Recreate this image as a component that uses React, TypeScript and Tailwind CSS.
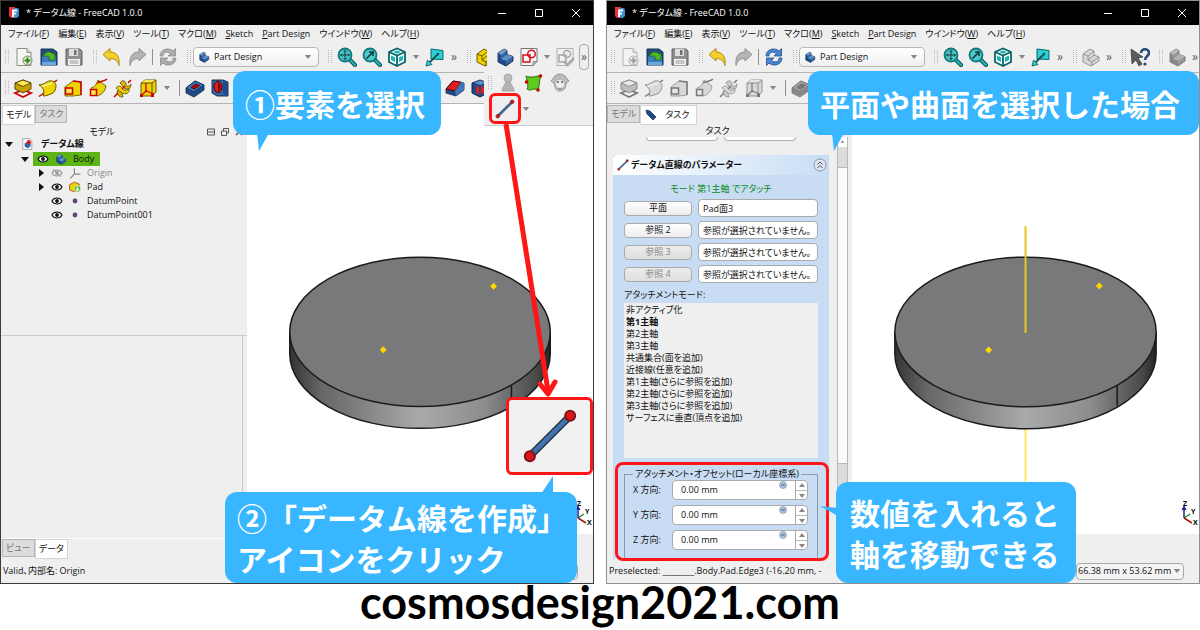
import type { ReactNode } from "react";

interface IconProps {
  muted?: boolean;
}

interface SvgProps extends IconProps {
  children: ReactNode;
}

function Svg({ muted, children }: SvgProps) {
  return (
    <svg
      viewBox="0 0 20 20"
      aria-hidden="true"
      className={`size-5 shrink-0 ${muted ? "grayscale opacity-60" : ""}`}
    >
      {children}
    </svg>
  );
}

/* ---------- アイコン ---------- */

function FreeCadLogo() {
  return (
    <svg viewBox="0 0 12 12" aria-hidden="true" className="size-3 shrink-0">
      <path d="M1 0h6v11H3L1 9z" fill="#e8323c" />
      <path d="M6 1h4l1 2v6l-2 2H6z" fill="#3b8fd0" />
      <path d="M4 2.500h5v2H6v1.300h2.200v1.800H6V10H4z" fill="#fff" />
    </svg>
  );
}

function NewIcon({ muted }: IconProps) {
  return (
    <Svg muted={muted}>
      <path d="M3 1.500h10l4 4v13H3z" fill="#f6f6f4" stroke="#8a8c88" />
      <path d="M13 1.500v4h4" fill="#ddd" stroke="#8a8c88" />
      <circle cx="13.500" cy="13.500" r="4.500" fill="#e8f3df" stroke="#6b8e58" />
      <path d="M13.500 10.500v6M10.500 13.500h6" stroke="#2f7d18" strokeWidth="2" />
    </Svg>
  );
}

function OpenIcon() {
  return (
    <Svg>
      <path d="M2 2h12l4 3v13H2z" fill="#234a7c" stroke="#17335a" />
      <path d="M3 9h14v9H3z" fill="#3d7cc4" />
      <path d="M3 15h14v3H3z" fill="#6ea5e0" />
      <path d="M4 10c1-5 7-7 10-3l2-1v7H9l2-2c-2-3-5-2-7-1z" fill="#4fb52a" stroke="#1d6c0c" strokeWidth=".8" />
    </Svg>
  );
}

function SaveIcon() {
  return (
    <Svg>
      <path d="M2 2h14l2 2v14H2z" fill="#8f918e" stroke="#5d5f5c" />
      <path d="M5 2h9v7H5z" fill="#dfe0de" />
      <path d="M10 3h2.500v5H10z" fill="#6e706d" />
      <path d="M4 12h12v6H4z" fill="#f4f4f3" />
      <path d="M5.500 14h9M5.500 16h9" stroke="#999" />
    </Svg>
  );
}

function UndoIcon() {
  return (
    <Svg>
      <path d="M1 7.500 8 1.500v3.500c6 0 10 4 9 13.500-1.500-5-4-7-9-7V14z" fill="#f5cf2c" stroke="#a87f06" strokeWidth=".9" />
    </Svg>
  );
}

function RedoIcon() {
  return (
    <Svg>
      <path d="M19 7.500 12 1.500v3.500C6 5 2 9 3 18.500c1.500-5 4-7 9-7V14z" fill="#b4b5b3" stroke="#8b8c8a" strokeWidth=".9" />
    </Svg>
  );
}

function RefreshIcon({ muted }: IconProps) {
  return (
    <Svg muted={muted}>
      <path d="M2 9c0-7 9-9 13-5l2.500-2.500V9H10l2.500-2.500C9 4 5 5 5 9z" fill="#4a86cf" stroke="#1f4e8f" strokeWidth=".8" />
      <path d="M18 11c0 7-9 9-13 5l-2.500 2.500V11H10l-2.500 2.500C11 16 15 15 15 11z" fill="#4a86cf" stroke="#1f4e8f" strokeWidth=".8" />
    </Svg>
  );
}

function BodyIcon({ muted }: IconProps) {
  return (
    <Svg muted={muted}>
      <path d="M3 6l6-4 3 1.500v4l6 2V14l-7 5-8-4z" fill="#3465a4" stroke="#0f2744" strokeWidth=".9" />
      <path d="M3 6l6-4 3 1.500L6 8z" fill="#729fcf" />
      <path d="M6 12l6-4.500 6 2-7 4.500z" fill="#5f8fc8" />
      <path d="M3 6l3 2v4l5 2v5l-8-4z" fill="#204a87" />
    </Svg>
  );
}

function ZoomIcon({ selection }: { selection?: boolean }) {
  return (
    <Svg>
      <path d="M12 12l6 6" stroke="#0d4d50" strokeWidth="4" strokeLinecap="round" />
      <path d="M12 12l6 6" stroke="#1fb6b8" strokeWidth="2.200" strokeLinecap="round" />
      <circle cx="8" cy="8" r="6.500" fill="#4fc8ca" stroke="#117a7e" strokeWidth="1.800" />
      {selection ? (
        <path d="M4.500 11.500 11 5M7 5h4v4" stroke="#0b3c3e" strokeWidth="1.600" fill="none" />
      ) : (
        <path d="M8 3.500v9M3.500 8h9M6.500 5 8 3.500 9.500 5M6.500 11 8 12.500 9.500 11M5 6.500 3.500 8 5 9.500M11 6.500 12.500 8 11 9.500" stroke="#0b3c3e" fill="none" />
      )}
    </Svg>
  );
}

function ViewCubeIcon() {
  return (
    <Svg>
      <path d="M2 5l8-3.500L18 5v10l-8 4-8-4z" fill="#f4ffff" stroke="#0d6468" strokeWidth="1.800" />
      <path d="M2 5l8 3.500L18 5M10 8.500V19" fill="none" stroke="#0d6468" strokeWidth="1.800" />
      <path d="M6 5l4-1.500L14 5l-4 1.700zM4 8.500l4 1.800V15l-4-2zM16 8.500l-4 1.800V15l4-2z" fill="#1fb3b6" />
    </Svg>
  );
}

function LinkViewIcon() {
  return (
    <Svg>
      <path d="M6 2l12 1.500v9L6 12z" fill="#2bd0d2" stroke="#0d6468" />
      <path d="M13 7l-9 9" stroke="#0d5357" strokeWidth="1.800" />
      <path d="M1 19l1.500-6L7 17.500z" fill="#2bd0d2" stroke="#0d5357" strokeWidth=".8" />
      <circle cx="13" cy="7" r="1.300" fill="#0d5357" />
    </Svg>
  );
}

function YellowPartIcon({ muted }: IconProps) {
  return (
    <Svg muted={muted}>
      <path d="M2 7l7-5 4 2v4l5 2v4l-8 5-8-4z" fill="#edd400" stroke="#5c4a00" strokeWidth=".9" />
      <path d="M2 7l5 2v4l4 2v4M7 9l6-5M7 13l6-5M11 15l7-5" fill="none" stroke="#5c4a00" strokeWidth=".9" />
    </Svg>
  );
}

function SketchIcon() {
  return (
    <Svg>
      <path d="M2 1.500h16v13l-4 4H2z" fill="#f7f7f7" stroke="#777" />
      <path d="M18 14.500h-4v4z" fill="#bbb" stroke="#777" strokeWidth=".7" />
      <circle cx="12.500" cy="7" r="3.800" fill="none" stroke="#d81418" strokeWidth="1.500" />
      <path d="M4 8h7v7H4z" fill="none" stroke="#d81418" strokeWidth="1.500" />
    </Svg>
  );
}

function ValidateIcon() {
  return (
    <Svg muted>
      <path d="M2 1.500h16v13l-4 4H2z" fill="#f2f2f2" stroke="#888" />
      <circle cx="12" cy="7" r="3.500" fill="none" stroke="#777" strokeWidth="1.500" />
      <path d="M4 8h7v7H4z" fill="none" stroke="#777" strokeWidth="1.500" />
      <path d="M9 14l3 4 7-7" fill="none" stroke="#777" strokeWidth="2.200" />
    </Svg>
  );
}

function PadIcon({ muted }: IconProps) {
  return (
    <Svg muted={muted}>
      <path d="M2 15l8-3 8 3-8 4z" fill="#fff" stroke="#cc0000" strokeWidth="1.800" />
      <path d="M2 5l8-3 8 3v6l-8 4-8-4z" fill="#c4a000" stroke="#4a3b00" strokeWidth=".9" />
      <path d="M2 5l8-3 8 3-8 3.500z" fill="#fce94f" stroke="#4a3b00" strokeWidth=".9" />
    </Svg>
  );
}

function RevolveIcon({ muted }: IconProps) {
  return (
    <Svg muted={muted}>
      <path d="M1 18.500 6 15M15 5l4-3" stroke="#cc0000" strokeWidth="1.500" />
      <path d="M1 7c4 0 7-3 10-4s7 1 7 5-2 7-5 8-5 2-8 2c2-5 0-9-4-11z" fill="#edd400" stroke="#5c4a00" strokeWidth=".9" />
      <path d="M4 8c4 0 7-2 10-3" fill="none" stroke="#fff7a0" strokeWidth="1.500" />
    </Svg>
  );
}

function LoftIcon({ muted }: IconProps) {
  return (
    <Svg muted={muted}>
      <path d="M2 9l8-6 8 1v13l-8 1H2z" fill="#edd400" stroke="#5c4a00" strokeWidth=".8" />
      <path d="M10 3l8 1v13" fill="none" stroke="#cc0000" strokeWidth="1.500" />
      <path d="M2.500 10h7v6h-7z" fill="#fce94f" stroke="#cc0000" strokeWidth="1.500" />
    </Svg>
  );
}

function PipeIcon({ muted }: IconProps) {
  return (
    <Svg muted={muted}>
      <path d="M3 10c4-1 6-4 7-8l8 6c-1 6-5 9-9 10z" fill="#edd400" stroke="#5c4a00" strokeWidth=".8" />
      <path d="M2.500 11.500h6v6h-6z" fill="#fce94f" stroke="#cc0000" strokeWidth="1.500" />
      <path d="M9 5c3-2 7-1 10-4" fill="none" stroke="#cc0000" strokeWidth="1.500" />
    </Svg>
  );
}

function HelixIcon({ muted }: IconProps) {
  return (
    <Svg muted={muted}>
      <path d="M3 10c2-3 5-2 6 0s4 4 7 0c1 5-3 7-7 5s-3-3-6-5z" fill="#edd400" stroke="#5c4a00" strokeWidth=".8" />
      <path d="M7 5c2-4 6-2 6 1s3 3 5 0c0 6-5 6-7 4S9 7 7 5zM4 13c3-1 5 1 6 6-4 0-6-2-6-6z" fill="#d6b800" stroke="#5c4a00" strokeWidth=".8" />
      <path d="M1 19l4-4M9 11l3-3M15 5l3-3" stroke="#cc0000" strokeWidth="1.500" />
    </Svg>
  );
}

function PrimitiveIcon({ muted }: IconProps) {
  return (
    <Svg muted={muted}>
      <path d="M3 5l4-3h11v12l-4 4H3z" fill="#edd400" stroke="#5c4a00" strokeWidth=".9" />
      <path d="M3 5l4-3h11l-4 3z" fill="#fce94f" />
      <path d="M3 5h11v13M14 5l4-3" fill="none" stroke="#5c4a00" />
      <path d="M8 5v8l-5 5M8 13l8 3" fill="none" stroke="#cc0000" strokeWidth="1.200" />
      <path d="M2 16h3v3H2zM13 16h3v3h-3zM7 12h2v2H7z" fill="#cc0000" />
    </Svg>
  );
}

function PocketIcon({ muted }: IconProps) {
  return (
    <Svg muted={muted}>
      <path d="M1 10l9-7 9 4v5l-10 7-8-4z" fill="#204a87" stroke="#0f2744" strokeWidth=".8" />
      <path d="M1 10l9-7 9 4-10 7z" fill="#3f74b6" stroke="#0f2744" strokeWidth=".8" />
      <path d="M6 9.500 10.500 6l4 1.500L9.500 11z" fill="#cc0000" stroke="#300" strokeWidth=".8" />
    </Svg>
  );
}

function HoleIcon({ muted }: IconProps) {
  return (
    <Svg muted={muted}>
      <path d="M2 2h11l5 2v14H7l-5-3z" fill="#3465a4" stroke="#0f2744" strokeWidth=".9" />
      <path d="M13 2l5 2v14l-5-3z" fill="#204a87" />
      <ellipse cx="8" cy="9" rx="4" ry="5.500" fill="#e11d1d" stroke="#3a0000" />
      <path d="M8 4.500c3 1 3 8 0 9" fill="#7a0000" />
    </Svg>
  );
}

function ChamferIcon() {
  return (
    <Svg>
      <path d="M1 11 8 3l11 2v7l-8 6-10-3z" fill="#204a87" stroke="#0f2744" strokeWidth=".8" />
      <path d="M1 11 8 3l8 1-6 9z" fill="#e11d1d" stroke="#3a0000" strokeWidth=".8" />
      <path d="M10 13l6-9 3 1v7l-8 6z" fill="#3f74b6" />
    </Svg>
  );
}

function GrooveIcon() {
  return (
    <Svg>
      <path d="M2 5l8-3 8 3v10l-8 4-8-4z" fill="#204a87" stroke="#0f2744" />
      <path d="M4 4.500l6-2 6 2-6 2.500z" fill="#5f8fc8" />
      <path d="M6 8l3 1v7l-3-1zM14 8l-3 1v7l3-1z" fill="#e11d1d" />
    </Svg>
  );
}

function CloneIcon() {
  return (
    <Svg muted>
      <circle cx="10" cy="5" r="4" fill="#999" stroke="#777" />
      <path d="M8 9h4c1 3 4 5 4 9H4c0-4 3-6 4-9z" fill="#8c8c8c" stroke="#777" />
    </Svg>
  );
}

function SubShapeIcon() {
  return (
    <Svg>
      <path d="M2 3c4 2 10 1 15-1-2 5-1 9-3 15-4-3-7 2-11-1 2-3 0-8-1-13z" fill="#5fc91e" stroke="#2b6d08" />
      <circle cx="16.500" cy="3" r="1.800" fill="#cc0000" />
      <circle cx="2.500" cy="9" r="1.800" fill="#cc0000" />
      <circle cx="14" cy="17" r="1.800" fill="#cc0000" />
    </Svg>
  );
}

function SheepIcon() {
  return (
    <Svg muted>
      <path d="M5 3c3-3 8-2 10 0l4 5-3 2c0 5-2 8-6 8s-5-3-6-8L1 8z" fill="#999" stroke="#555" />
      <circle cx="10" cy="11" r="4" fill="#eee" />
      <circle cx="8" cy="9" r="1" />
      <circle cx="12" cy="9" r="1" />
      <path d="M8 15l2 1 2-1" stroke="#444" fill="none" />
    </Svg>
  );
}

function WhatsThisIcon() {
  return (
    <Svg>
      <path d="M11 6c0-5 8-5 8 0 0 3-4 3-4 7" fill="none" stroke="#24477c" strokeWidth="2.600" />
      <circle cx="15" cy="17" r="1.600" fill="#24477c" />
      <path d="M1 2l12 8-5 1 4 6-3 2-3-6-4 4z" fill="#5b5d5b" stroke="#333" strokeWidth=".7" />
    </Svg>
  );
}

function DatumLineIcon({ className }: { className: string }) {
  return (
    <svg viewBox="0 0 20 20" aria-hidden="true" className={className}>
      <path d="M2.800 17.200 17.200 2.800" stroke="#27323f" strokeWidth="2.600" />
      <path d="M2.800 17.200 17.200 2.800" stroke="#3f74b0" strokeWidth="1.600" />
      <circle cx="2.800" cy="17.200" r="1.800" fill="#d8171b" stroke="#7b1416" strokeWidth=".7" />
      <circle cx="17.200" cy="2.800" r="1.800" fill="#d8171b" stroke="#7b1416" strokeWidth=".7" />
    </svg>
  );
}

function EyeIcon({ off }: { off?: boolean }) {
  return (
    <svg viewBox="0 0 12 8" aria-hidden="true" className="h-2 w-3 shrink-0">
      <path d="M1 4c2-4 8-4 10 0-2 4-8 4-10 0z" fill={off ? "none" : "#fff"} stroke={off ? "#999" : "#111"} strokeWidth="1.100" />
      <circle cx="6" cy="4" r="1.900" fill={off ? "#999" : "#111"} />
      {off && <path d="M2 0l8 8" stroke="#999" />}
    </svg>
  );
}

function DocumentIcon() {
  return (
    <Svg>
      <path d="M3 1h12l3 3v15H3z" fill="#fff" stroke="#777" />
      <path d="M6 9l5-3 5 3v5l-5 3-5-3z" fill="#3465a4" />
      <circle cx="13" cy="7" r="3.500" fill="#d8171b" />
    </Svg>
  );
}

function OriginIcon() {
  return (
    <Svg>
      <path d="M9 2v10h10M9 12l-7 7" fill="none" stroke="#888" strokeWidth="2" />
    </Svg>
  );
}

function PadTipIcon() {
  return (
    <Svg>
      <path d="M1 6l8-4 8 3v8l-8 5-8-3z" fill="#edd400" stroke="#a40000" />
      <circle cx="14" cy="13" r="5.500" fill="#4fb52a" stroke="#fff" />
      <path d="M14 9v6M11.500 13l2.500 3 2.500-3" fill="none" stroke="#fff" strokeWidth="1.800" />
    </Svg>
  );
}

function PointIcon() {
  return (
    <Svg>
      <circle cx="10" cy="10" r="4" fill="#3d4f86" />
      <circle cx="10" cy="10" r="2" fill="#a83250" />
    </Svg>
  );
}

function DownArrow() {
  return (
    <svg viewBox="0 0 8 5" aria-hidden="true" className="h-1 w-2 shrink-0">
      <path d="M0 0h8L4 5z" fill="#888" />
    </svg>
  );
}

/* ---------- ツールバー ---------- */

function Grip() {
  return (
    <svg viewBox="0 0 4 14" aria-hidden="true" className="h-3.5 w-1 shrink-0">
      <path d="M.5 0v14M3.500 0v14" stroke="#b5b5b5" strokeDasharray="1 1" />
    </svg>
  );
}

function Separator() {
  return <span className="h-4 w-px shrink-0 bg-[#8f8f8f]" />;
}

function ToolButton({ label, children }: { label: string; children: ReactNode }) {
  return (
    <button type="button" aria-label={label} className="flex shrink-0 items-center">
      {children}
    </button>
  );
}

function MoreButton() {
  return (
    <button type="button" aria-label="その他" className="w-2 shrink-0 text-center text-xs leading-4 text-[#555]">
      »
    </button>
  );
}

const menus = [
  { label: "ファイル", key: "F" },
  { label: "編集", key: "E" },
  { label: "表示", key: "V" },
  { label: "ツール", key: "T" },
  { label: "マクロ", key: "M" },
  { label: "Sketch" },
  { label: "Part Design" },
  { label: "ウインドウ", key: "W" },
  { label: "ヘルプ", key: "H" },
];

function TitleBar() {
  return (
    <header className="flex h-6 shrink-0 items-center bg-black pl-[7px] pr-3 text-white">
      <FreeCadLogo />
      <h2 className="ml-1.5 flex-1">* データム線 - FreeCAD 1.0.0</h2>
      <div className="flex items-center gap-[27px]">
        <button type="button" aria-label="最小化">
          <svg viewBox="0 0 10 10" className="size-2.5"><path d="M1 5.500h8" stroke="#fff" /></svg>
        </button>
        <button type="button" aria-label="最大化">
          <svg viewBox="0 0 10 10" className="size-2.5"><path d="M1.500 1.500h7v7h-7z" fill="none" stroke="#fff" /></svg>
        </button>
        <button type="button" aria-label="閉じる">
          <svg viewBox="0 0 10 10" className="size-2.5"><path d="M1 1l8 8M9 1 1 9" stroke="#fff" /></svg>
        </button>
      </div>
    </header>
  );
}

function MenuBar() {
  return (
    <nav className="flex h-[17px] shrink-0 items-center gap-[9px] pl-[7px]">
      {menus.map((menu) => (
        <button key={menu.label} type="button" className="whitespace-nowrap">
          {menu.key ? (
            <>
              {menu.label}(<u>{menu.key}</u>)
            </>
          ) : (
            <>
              <u>{menu.label[0]}</u>
              {menu.label.slice(1)}
            </>
          )}
        </button>
      ))}
    </nav>
  );
}

function MainToolbar({ editing }: { editing?: boolean }) {
  return (
    <div className="flex h-[31px] shrink-0 items-center gap-[9px] overflow-hidden border-b border-[#b4b4b4] pl-1">
      <div className="flex items-center gap-[5px]">
        <Grip />
        <ToolButton label="新規"><NewIcon muted={editing} /></ToolButton>
        <ToolButton label="開く"><OpenIcon /></ToolButton>
        <ToolButton label="保存"><SaveIcon /></ToolButton>
      </div>
      <div className="flex items-center gap-[5px]">
        <Grip />
        <ToolButton label="元に戻す"><UndoIcon /></ToolButton>
        <ToolButton label="やり直す"><RedoIcon /></ToolButton>
        <Separator />
        <ToolButton label="更新"><RefreshIcon muted={!editing} /></ToolButton>
      </div>
      <div className="flex items-center gap-0.5">
        <Grip />
        <div className="flex w-[126px] items-center rounded-sm border border-[#b8b8b8] bg-gradient-to-b from-white to-[#f0f0f0] pl-1 pr-1.5">
          <span className="[&>svg]:size-3"><BodyIcon /></span>
          <select aria-label="ワークベンチ" className="h-[18px] min-w-0 flex-1 appearance-none bg-transparent pl-1">
            <option>Part Design</option>
          </select>
          <DownArrow />
        </div>
      </div>
      <div className="flex items-center gap-[5px]">
        <Grip />
        <ToolButton label="全てにフィット"><ZoomIcon /></ToolButton>
        <ToolButton label="選択にフィット"><ZoomIcon selection /></ToolButton>
        <ToolButton label="アイソメトリック"><ViewCubeIcon /></ToolButton>
        <DownArrow />
        <ToolButton label="リンク先へ移動"><LinkViewIcon /></ToolButton>
        <MoreButton />
      </div>
      {editing ? (
        <>
          <div className="flex items-center gap-1">
            <Grip />
            <ToolButton label="パート"><YellowPartIcon muted /></ToolButton>
            <MoreButton />
          </div>
          <div className="flex items-center gap-1">
            <Grip />
            <ToolButton label="これは何?"><WhatsThisIcon /></ToolButton>
          </div>
          <div className="flex items-center gap-1">
            <Grip />
            <ToolButton label="ボディー"><BodyIcon muted /></ToolButton>
            <MoreButton />
          </div>
        </>
      ) : (
        <div className="flex items-center gap-1">
          <Grip />
          <div className="mr-1 w-3 overflow-hidden">
            <ToolButton label="パート"><YellowPartIcon /></ToolButton>
          </div>
          <ToolButton label="ボディー"><BodyIcon /></ToolButton>
          <ToolButton label="スケッチ"><SketchIcon /></ToolButton>
          <DownArrow />
          <ToolButton label="スケッチを検証"><ValidateIcon /></ToolButton>
          <span className="flex rounded-sm border border-[#aaa] py-1"><MoreButton /></span>
        </div>
      )}
    </div>
  );
}

function ModelingToolbar({ muted }: IconProps) {
  return (
    <div className="flex h-[31px] shrink-0 items-center gap-1 overflow-hidden border-b border-[#b4b4b4] pl-1">
      <Grip />
      <div className="flex items-center gap-[5px]">
        <ToolButton label="パッド"><PadIcon muted={muted} /></ToolButton>
        <ToolButton label="レボリューション"><RevolveIcon muted={muted} /></ToolButton>
        <ToolButton label="ロフト"><LoftIcon muted={muted} /></ToolButton>
        <ToolButton label="パイプ"><PipeIcon muted={muted} /></ToolButton>
        <ToolButton label="らせん"><HelixIcon muted={muted} /></ToolButton>
        <ToolButton label="プリミティブ"><PrimitiveIcon muted={muted} /></ToolButton>
        <DownArrow />
      </div>
      <div className="flex items-center gap-[5px] pl-1">
        <Separator />
        <ToolButton label="ポケット"><PocketIcon muted={muted} /></ToolButton>
        <ToolButton label="ホール"><HoleIcon muted={muted} /></ToolButton>
      </div>
      {!muted && (
        <div className="ml-auto mr-[103px] flex items-center gap-[5px]">
          <ToolButton label="面取り"><ChamferIcon /></ToolButton>
          <ToolButton label="グルーブ"><GrooveIcon /></ToolButton>
        </div>
      )}
    </div>
  );
}

/* ---------- 3Dビュー ---------- */

function Viewport({ axis }: { axis?: boolean }) {
  const gradient = axis ? "side-right" : "side-left";

  return (
    <div className="flex min-w-0 flex-1 flex-col">
      <div className="relative min-h-0 flex-1 bg-white">
        <svg viewBox="0 0 348 430" role="img" aria-label="円盤" className="size-full">
          <defs>
            <linearGradient id={gradient}>
              <stop offset="0" stopColor="#333" />
              <stop offset=".12" stopColor="#666" />
              <stop offset=".5" stopColor="#a9aaac" />
              <stop offset=".75" stopColor="#8b8c8e" />
              <stop offset=".95" stopColor="#484848" />
              <stop offset="1" stopColor="#222" />
            </linearGradient>
          </defs>
          {axis && <path d="M174 320v58" stroke="#ffe45c" strokeWidth="2" />}
          <path d="M43 228v22a131 75 0 0 0 262 0v-22z" fill={`url(#${gradient})`} stroke="#1b1b1b" strokeWidth="1.500" />
          <ellipse cx="174" cy="228" rx="131" ry="75" fill="#78797b" stroke="#1b1b1b" strokeWidth="1.500" />
          <path d="M266 282v20" stroke="#1b1b1b" strokeWidth="1.500" />
          <path d="M248 178.500l3.500 3.500-3.500 3.500-3.500-3.500zM137 242.500l3.500 3.500-3.500 3.500-3.500-3.500z" fill="#ffd400" />
          {axis && <path d="M174 122v107" stroke="#e9c51c" strokeWidth="2" />}
        </svg>
        <svg viewBox="0 0 20 28" aria-hidden="true" className="absolute bottom-1.5 right-0 h-7 w-5">
          <path d="M5 18V8" stroke="#22209a" strokeWidth="1.500" />
          <path d="M2.500 10 5 5l2.500 5z" fill="#22209a" />
          <path d="M5 18l6-4" stroke="#1c8a2c" strokeWidth="1.500" />
          <path d="M5 18l8 5" stroke="#a01818" strokeWidth="1.500" />
          <text x="4" y="6" className="text-[7px] font-bold">Z</text>
          <text x="12" y="14" className="text-[7px] font-bold">Y</text>
          <text x="14" y="25" className="text-[7px] font-bold">X</text>
        </svg>
      </div>
      <div className="h-[25px] shrink-0" />
    </div>
  );
}

function StatusBar({ children }: { children: ReactNode }) {
  return (
    <footer className="flex h-6 shrink-0 items-center justify-between whitespace-nowrap pl-0.5 pr-[15px]">
      <span>{children}</span>
      <div className="flex h-[17px] shrink-0 items-center rounded-sm border border-[#aaa] bg-[#f4f4f4] pr-0.5">
        <select aria-label="寸法" className="appearance-none bg-transparent px-px">
          <option>66.38 mm x 53.62 mm</option>
        </select>
        <DownArrow />
      </div>
    </footer>
  );
}

function PanelTab({ active, children }: { active?: boolean; children: ReactNode }) {
  return (
    <button
      type="button"
      role="tab"
      aria-selected={Boolean(active)}
      className={`flex items-center gap-2 whitespace-nowrap border px-[3px] ${
        active ? "h-5 border-[#d5d5d5] bg-white" : "h-[18px] border-[#b4b4b4] bg-[#dcdcdc] text-[#777]"
      }`}
    >
      {children}
    </button>
  );
}

/* ---------- モデルパネル ---------- */

const treeItems = [
  { name: "Origin", icon: <OriginIcon />, hidden: true, branch: true },
  { name: "Pad", icon: <PadTipIcon />, branch: true },
  { name: "DatumPoint", icon: <PointIcon /> },
  { name: "DatumPoint001", icon: <PointIcon /> },
];

function TreeArrow({ open, blank }: { open?: boolean; blank?: boolean }) {
  return (
    <svg viewBox="0 0 8 8" aria-hidden="true" className="size-2 shrink-0">
      {!blank && <path d={open ? "M0 2h8L4 7z" : "M2 0l5 4-5 4z"} fill="#111" />}
    </svg>
  );
}

function ModelPanel() {
  return (
    <aside className="flex w-[246px] shrink-0 flex-col">
      <div role="tablist" className="flex h-[21px] shrink-0 items-start pl-px pt-px">
        <PanelTab active>モデル</PanelTab>
        <PanelTab>タスク</PanelTab>
      </div>
      <div className="grid h-3 shrink-0 grid-cols-[1fr_auto_1fr] items-center pr-1">
        <span />
        <h3 className="pr-10">モデル</h3>
        <div className="flex justify-end gap-1.5 text-[#555]">
          <svg viewBox="0 0 8 8" className="size-2"><path d="M.5 1h7v6h-7zM.5 4h7" fill="none" stroke="currentColor" /></svg>
          <svg viewBox="0 0 8 8" className="size-2"><path d="M.5 3h5v4.500h-5zM2.500 3V.5h5V5h-2" fill="none" stroke="currentColor" /></svg>
          <svg viewBox="0 0 8 8" className="size-2"><path d="M1 1l6 6M7 1 1 7" stroke="currentColor" strokeWidth="1.500" /></svg>
        </div>
      </div>
      <ul className="min-h-0 flex-1 border-b border-[#ccc]">
        <li className="flex h-3.5 items-center gap-2 pl-1">
          <TreeArrow open />
          <span className="[&>svg]:size-3"><DocumentIcon /></span>
          <strong>データム線</strong>
        </li>
        <li className="flex h-[15px] items-center gap-1 pl-5">
          <TreeArrow open />
          <span className="flex h-3.5 items-center gap-1.5 bg-[#5cb514] pl-1 pr-1.5">
            <EyeIcon />
            <span className="[&>svg]:size-3"><BodyIcon /></span>
            Body
          </span>
        </li>
        {treeItems.map((item) => (
          <li
            key={item.name}
            className={`flex h-3.5 items-center gap-1.5 pl-9 ${item.hidden ? "text-[#888]" : ""}`}
          >
            <TreeArrow blank={!item.branch} />
            <EyeIcon off={item.hidden} />
            <span className="[&>svg]:size-3">{item.icon}</span>
            {item.name}
          </li>
        ))}
      </ul>
      <div className="mr-1 h-[202px] shrink-0 border-r border-[#ccc]" />
      <div role="tablist" className="flex h-[21px] shrink-0 items-start border-t border-white pl-px">
        <PanelTab>ビュー</PanelTab>
        <PanelTab active>データ</PanelTab>
      </div>
    </aside>
  );
}

/* ---------- タスクパネル ---------- */

const references = [
  { label: "平面", value: "Pad面3" },
  { label: "参照 2", value: "参照が選択されていません。" },
  { label: "参照 3", value: "参照が選択されていません。", disabled: true },
  { label: "参照 4", value: "参照が選択されていません。", disabled: true },
];

const attachmentModes = [
  "非アクティブ化",
  "第1主軸",
  "第2主軸",
  "第3主軸",
  "共通集合(面を追加)",
  "近接線(任意を追加)",
  "第1主軸(さらに参照を追加)",
  "第2主軸(さらに参照を追加)",
  "第3主軸(さらに参照を追加)",
  "サーフェスに垂直(頂点を追加)",
];

function OffsetRow({ axis }: { axis: string }) {
  return (
    <div className="flex items-center">
      <label htmlFor={`offset-${axis}`} className="w-[39px] shrink-0 whitespace-nowrap">
        {axis} 方向:
      </label>
      <div className="flex h-5 min-w-0 flex-1 rounded-sm border border-[#aaa] bg-white">
        <input id={`offset-${axis}`} defaultValue="0.00 mm" className="w-0 min-w-0 flex-1 bg-transparent pl-2" />
        <svg viewBox="0 0 8 8" aria-hidden="true" className="mr-2 size-2 shrink-0">
          <circle cx="4" cy="4" r="3.500" fill="#b9cde3" stroke="#7790ac" strokeWidth=".7" />
          <path d="M2 4h4M3 2.500v3M5 2.500v3" stroke="#4b6a90" strokeWidth=".7" />
        </svg>
        <div className="flex w-3 shrink-0 flex-col items-center justify-around border-l border-[#aaa]">
          <svg viewBox="0 0 6 4" aria-hidden="true" className="h-1 w-1.5"><path d="M0 4h6L3 0z" fill="#888" /></svg>
          <span className="h-px w-full bg-[#bbb]" />
          <svg viewBox="0 0 6 4" aria-hidden="true" className="h-1 w-1.5"><path d="M0 0h6L3 4z" fill="#888" /></svg>
        </div>
      </div>
    </div>
  );
}

function TaskPanel() {
  return (
    <aside className="flex min-h-0 w-[245px] shrink-0 flex-col">
      <div role="tablist" className="flex h-[21px] shrink-0 items-start pt-px">
        <PanelTab>モデル</PanelTab>
        <PanelTab active>
          <svg viewBox="0 0 12 12" aria-hidden="true" className="ml-px size-3">
            <path d="M1 1l4 1 6 6-3 3-6-6z" fill="#204a87" stroke="#0f2744" strokeWidth=".7" />
          </svg>
          <span className="pr-1">タスク</span>
        </PanelTab>
      </div>
      <h3 className="h-3 shrink-0 pr-6 text-center leading-3">タスク</h3>
      <div className="flex min-h-0 flex-1">
        <div className="min-w-0 flex-1 overflow-hidden pl-1.5 pr-2">
          <div className="flex justify-center gap-1.5">
            <div className="h-1 w-[72px] rounded-b border-x border-b border-[#b0b0b0] bg-white" />
            <div className="h-1 w-[72px] rounded-b border-x border-b border-[#b0b0b0] bg-white" />
          </div>
          <section className="mt-3.5 bg-[#c8ddf4]">
            <div className="flex h-5 items-center gap-0.5 rounded-t-sm bg-gradient-to-r from-white to-[#c8ddf4] pl-1 pr-0.5">
              <DatumLineIcon className="size-3" />
              <h4 className="flex-1 whitespace-nowrap font-bold">データム直線のパラメーター</h4>
              <button type="button" aria-label="折りたたむ">
                <svg viewBox="0 0 14 14" className="size-3.5">
                  <circle cx="7" cy="7" r="6" fill="#dde5ee" stroke="#8b96a3" />
                  <path d="M4.500 6.500 7 4l2.500 2.500M4.500 10 7 7.500 9.500 10" fill="none" stroke="#555" />
                </svg>
              </button>
            </div>
            <div className="px-[11px] pt-2">
              <p className="text-center leading-3 text-[#0a8a1a]">モード 第1主軸 でアタッチ</p>
              <div className="mt-1 flex flex-col gap-1">
                {references.map((reference) => (
                  <div key={reference.label} className="flex items-center gap-1.5">
                    <button
                      type="button"
                      disabled={reference.disabled}
                      className="h-[15px] w-[68px] shrink-0 rounded-sm border border-[#aaa] bg-gradient-to-b from-white to-[#ececec] leading-3 disabled:from-[#ececec] disabled:to-[#dedede] disabled:text-[#888]"
                    >
                      {reference.label}
                    </button>
                    <input
                      aria-label={reference.label}
                      defaultValue={reference.value}
                      className="h-[18px] min-w-0 flex-1 rounded-sm border border-[#aaa] bg-white pl-1"
                    />
                  </div>
                ))}
              </div>
              <label htmlFor="attachment-mode" className="mt-1 block leading-4">
                アタッチメントモード:
              </label>
              <select
                id="attachment-mode"
                size={10}
                className="block h-[155px] w-full overflow-hidden bg-[#efefef]"
              >
                {attachmentModes.map((mode) => (
                  <option
                    key={mode}
                    className={`h-3 min-h-0 p-0 pl-0.5 leading-3 ${mode === "第1主軸" ? "font-bold" : ""}`}
                  >
                    {mode}
                  </option>
                ))}
              </select>
              <fieldset className="mt-2.5 h-[120px] min-w-0 border border-[#8d9aaa] pl-2 pr-[9px]">
                <legend className="whitespace-nowrap px-0.5 leading-3">アタッチメント・オフセット(ローカル座標系)</legend>
                <div className="flex flex-col gap-[5px]">
                  <OffsetRow axis="X" />
                  <OffsetRow axis="Y" />
                  <OffsetRow axis="Z" />
                </div>
              </fieldset>
            </div>
          </section>
        </div>
        <div className="mr-1 flex w-[11px] shrink-0 flex-col border-x border-[#b8b8b8] bg-[#dcdcdc]">
          <span className="h-2.5 bg-white text-center text-[6px] leading-2 text-[#888]">▴</span>
          <span className="mt-5 h-[297px] border-y border-[#b8b8b8] bg-[#fafafa]" />
        </div>
      </div>
    </aside>
  );
}

/* ---------- 注釈 ---------- */

interface CalloutProps {
  className: string;
  tail: ReactNode;
  children: ReactNode;
}

function Callout({ className, tail, children }: CalloutProps) {
  return (
    <div
      className={`absolute z-10 flex items-center whitespace-nowrap rounded-xl bg-[#38b6ff] font-['Noto_Sans_CJK_JP',sans-serif] text-[30px] leading-[41px] font-bold text-white [font-feature-settings:normal] [text-spacing-trim:space-all] ${className}`}
    >
      {tail}
      <p>{children}</p>
    </div>
  );
}

function Tail({ className, d }: { className: string; d: string }) {
  return (
    <svg viewBox="0 0 18 18" aria-hidden="true" className={`absolute size-[18px] ${className}`}>
      <path d={d} fill="#38b6ff" />
    </svg>
  );
}

function SelectWindow() {
  return (
    <section className="relative flex min-h-0 min-w-0 flex-col border border-[#3b3b3b] bg-[#efefef]">
      <TitleBar />
      <MenuBar />
      <MainToolbar />
      <ModelingToolbar />
      <div className="flex min-h-0 flex-1">
        <ModelPanel />
        <Viewport />
      </div>
      <StatusBar>Valid、内部名: Origin</StatusBar>

      {/* はみ出したツールバー */}
      <div className="absolute right-0 top-[71px] flex w-[109px] flex-col border-b border-[#ccc] bg-[#efefef] pb-px pl-1">
        <div className="flex h-[21px] items-center gap-1.5">
          <Grip />
          <ToolButton label="クローン"><CloneIcon /></ToolButton>
          <ToolButton label="サブシェイプバインダー"><SubShapeIcon /></ToolButton>
          <ToolButton label="シェイプバインダー"><SheepIcon /></ToolButton>
        </div>
        <div className="flex items-center gap-px pl-px">
          <button
            type="button"
            aria-label="データム線を作成"
            className="flex h-[31px] w-8 items-center justify-center rounded-md border-[3px] border-[#ff1616]"
          >
            <DatumLineIcon className="size-5" />
          </button>
          <DownArrow />
        </div>
      </div>

      <svg viewBox="0 0 60 280" aria-hidden="true" className="absolute right-[32px] top-[120px] h-[280px] w-[60px]">
        <path d="M5 3 47 270" stroke="#ff1616" strokeWidth="5" fill="none" />
        <path d="M39 263l8 10 7-12" stroke="#ff1616" strokeWidth="5" fill="none" strokeLinecap="round" strokeLinejoin="round" />
      </svg>
      <div className="absolute right-0 top-[396px] flex h-[78px] w-[87px] items-center justify-center rounded-md border-[3px] border-[#ff1616] bg-[#f1f1f1]">
        <DatumLineIcon className="size-14" />
      </div>

      <Callout
        className="left-[232px] top-[70px] h-16 w-[208px] pl-3"
        tail={<Tail className="left-6 top-[62px]" d="M0 0h12L2 18z" />}
      >
        ①要素を選択
      </Callout>
      <Callout
        className="bottom-0 left-[224px] h-[91px] w-[352px] pl-3"
        tail={<Tail className="-top-4 right-6" d="M6 18 18 0v18z" />}
      >
        ②「データム線を作成」
        <br />
        アイコンをクリック
      </Callout>
    </section>
  );
}

function ParameterWindow() {
  return (
    <section className="relative flex min-h-0 min-w-0 flex-col border border-[#8f8f8f] bg-[#efefef]">
      <TitleBar />
      <MenuBar />
      <MainToolbar editing />
      <ModelingToolbar muted />
      <div className="flex min-h-0 flex-1">
        <TaskPanel />
        <Viewport axis />
      </div>
      <StatusBar>Preselected: ________.Body.Pad.Edge3 (-16.20 mm, -</StatusBar>

      <div className="absolute bottom-[22px] left-2 h-[99px] w-[214px] rounded-lg border-[3px] border-[#ff1616]" />

      <Callout
        className="right-0 top-[70px] h-16 w-[391px] pl-3"
        tail={<Tail className="left-6 top-[62px]" d="M0 0h12L2 18z" />}
      >
        平面や曲面を選択した場合
      </Callout>
      <Callout
        className="bottom-0 left-[229px] h-[101px] w-[240px] pl-3.5"
        tail={<Tail className="-left-4 top-4" d="M0 8 18 10v8z" />}
      >
        数値を入れると
        <br />
        軸を移動できる
      </Callout>
    </section>
  );
}

export default function App() {
  return (
    <main
      lang="ja"
      className="flex h-screen flex-col bg-white font-['Open_Sans','Noto_Sans_CJK_JP',sans-serif] text-[9px] text-[#111] [font-feature-settings:'palt']"
    >
      <div className="grid min-h-0 flex-1 grid-cols-2 grid-rows-1 gap-3">
        <SelectWindow />
        <ParameterWindow />
      </div>
      <h1 className="h-[46px] shrink-0 text-center font-['Lato','Noto_Sans_CJK_JP',sans-serif] text-[45px] leading-9 font-bold text-black">
        cosmosdesign2021.com
      </h1>
    </main>
  );
}
